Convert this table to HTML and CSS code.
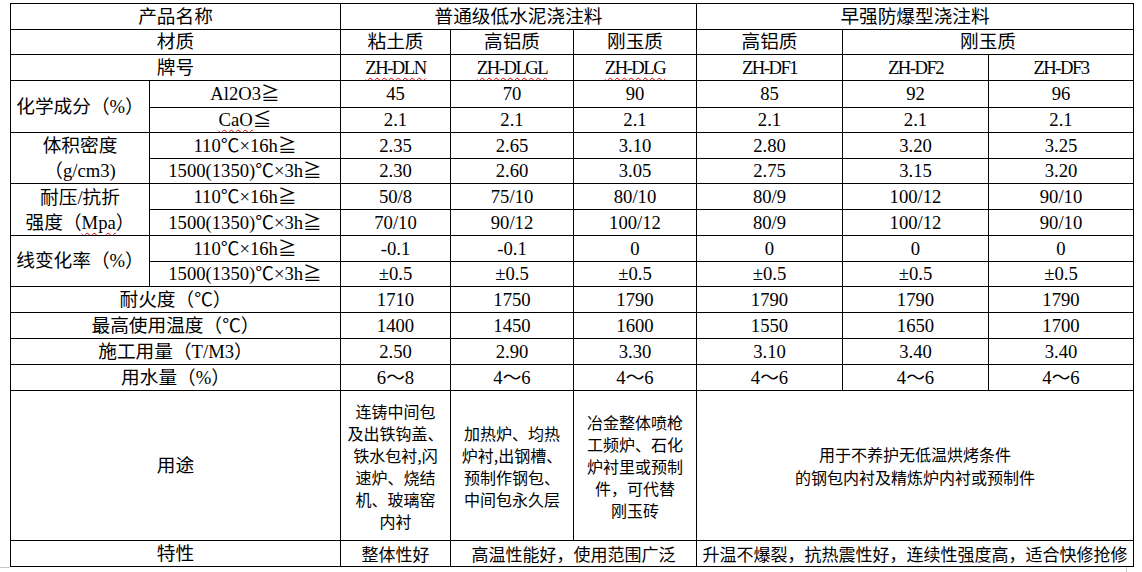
FILE: index.html
```html
<!DOCTYPE html>
<html lang="zh-CN">
<head>
<meta charset="utf-8">
<title>浇注料性能指标</title>
<link rel="stylesheet" href="styles.css">
</head>
<body>
<table class="spec">
  <colgroup>
    <col class="c-a"><col class="c-b"><col class="c-n"><col class="c-g"><col class="c-g"><col class="c-w"><col class="c-w"><col class="c-w2">
  </colgroup>
  <tbody>
    <tr class="h26"><td colspan="2">产品名称</td><td colspan="3">普通级低水泥浇注料</td><td colspan="3">早强防爆型浇注料</td></tr>
    <tr class="h25"><td colspan="2">材质</td><td>粘土质</td><td>高铝质</td><td>刚玉质</td><td>高铝质</td><td colspan="2">刚玉质</td></tr>
    <tr class="h26"><td colspan="2">牌号</td><td class="code"><span class="sp">ZH-DLN</span></td><td class="code"><span class="sp">ZH-DLGL</span></td><td class="code"><span class="sp">ZH-DLG</span></td><td class="code">ZH-DF1</td><td class="code">ZH-DF2</td><td class="code">ZH-DF3</td></tr>
    <tr class="h27"><td rowspan="2" class="lab">化学成分（%）</td><td>Al2O3≧</td><td>45</td><td>70</td><td>90</td><td>85</td><td>92</td><td>96</td></tr>
    <tr class="h25"><td><span class="sp">CaO</span>≦</td><td>2.1</td><td>2.1</td><td>2.1</td><td>2.1</td><td>2.1</td><td>2.1</td></tr>
    <tr class="h26"><td rowspan="2" class="lab two">体积密度<br>（g/cm3)</td><td>110℃×16h≧</td><td>2.35</td><td>2.65</td><td>3.10</td><td>2.80</td><td>3.20</td><td>3.25</td></tr>
    <tr class="h25"><td>1500(1350)℃×3h≧</td><td>2.30</td><td>2.60</td><td>3.05</td><td>2.75</td><td>3.15</td><td>3.20</td></tr>
    <tr class="h26"><td rowspan="2" class="lab two">耐压/抗折<br>强度（<span class="sp">Mpa</span>）</td><td>110℃×16h≧</td><td>50/8</td><td>75/10</td><td>80/10</td><td>80/9</td><td>100/12</td><td>90/10</td></tr>
    <tr class="h26"><td>1500(1350)℃×3h≧</td><td>70/10</td><td>90/12</td><td>100/12</td><td>80/9</td><td>100/12</td><td>90/10</td></tr>
    <tr class="h26"><td rowspan="2" class="lab">线变化率（%）</td><td>110℃×16h≧</td><td>-0.1</td><td>-0.1</td><td>0</td><td>0</td><td>0</td><td>0</td></tr>
    <tr class="h25"><td>1500(1350)℃×3h≧</td><td>±0.5</td><td>±0.5</td><td>±0.5</td><td>±0.5</td><td>±0.5</td><td>±0.5</td></tr>
    <tr class="h26"><td colspan="2">耐火度（℃）</td><td>1710</td><td>1750</td><td>1790</td><td>1790</td><td>1790</td><td>1790</td></tr>
    <tr class="h26"><td colspan="2">最高使用温度（℃）</td><td>1400</td><td>1450</td><td>1600</td><td>1550</td><td>1650</td><td>1700</td></tr>
    <tr class="h26"><td colspan="2">施工用量（T/M3）</td><td>2.50</td><td>2.90</td><td>3.30</td><td>3.10</td><td>3.40</td><td>3.40</td></tr>
    <tr class="h26"><td colspan="2">用水量（%）</td><td>6～8</td><td>4～6</td><td>4～6</td><td>4～6</td><td>4～6</td><td>4～6</td></tr>
    <tr class="h150">
      <td colspan="2">用途</td>
      <td class="use">连铸中间包<br>及出铁钩盖、<br>铁水包衬,闪<br>速炉、烧结<br>机、玻璃窑<br>内衬</td>
      <td class="use">加热炉、均热<br>炉衬,出钢槽、<br>预制作钢包、<br>中间包永久层</td>
      <td class="use">冶金整体喷枪<br>工频炉、石化<br>炉衬里或预制<br>件，可代替<br>刚玉砖</td>
      <td colspan="3" class="use wide">用于不养护无低温烘烤条件<br>的钢包内衬及精炼炉内衬或预制件</td>
    </tr>
    <tr class="h26">
      <td colspan="2">特性</td>
      <td class="feat">整体性好</td>
      <td colspan="2" class="feat">高温性能好，使用范围广泛</td>
      <td colspan="3" class="feat">升温不爆裂，抗热震性好，连续性强度高，适合快修抢修</td>
    </tr>
  </tbody>
</table>
<div class="mark mark-l"></div>
<div class="mark mark-r"></div>
</body>
</html>
```

FILE: styles.css
```css
html, body {
  margin: 0;
  padding: 0;
  background: #fff;
}

body {
  padding: 3px 0 0 10px;
  font-family: "Liberation Serif", "Noto Sans CJK SC", serif;
  font-size: 18.67px;
  color: #000;
  position: relative;
  height: 572px;
  box-sizing: border-box;
  overflow: hidden;
}

.spec {
  border-collapse: collapse;
  table-layout: fixed;
  width: 1124px;
}

.c-a { width: 139px; }
.c-b { width: 191px; }
.c-n { width: 110px; }
.c-g { width: 123px; }
.c-w { width: 146px; }
.c-w2 { width: 145px; }

.spec td {
  border: 1px solid #000;
  padding: 0;
  text-align: center;
  vertical-align: middle;
  line-height: 22px;
  white-space: nowrap;
  overflow: hidden;
}

.h25 { height: 25px; }
.h26 { height: 26px; }
.h27 { height: 27px; }
.h150 { height: 150px; }

.spec td.two {
  line-height: 25px;
}

.spec td.code {
  letter-spacing: -1.5px;
}

.sp {
  text-decoration: underline wavy #e00000;
  text-decoration-thickness: 1px;
  text-underline-offset: 3px;
}

.spec td.use {
  font-family: "Noto Sans CJK SC", sans-serif;
  font-size: 16px;
  line-height: 22px;
}

.spec td.wide {
  line-height: 23px;
}

.spec td.feat {
  font-family: "Noto Sans CJK SC", sans-serif;
  font-size: 17px;
  line-height: 22px;
}

.mark {
  position: absolute;
  background: #c8c8c8;
}

.mark-l {
  left: 0;
  top: 567px;
  width: 10px;
  height: 1px;
}

.mark-r {
  left: 1126px;
  top: 567px;
  width: 1px;
  height: 5px;
}
```
